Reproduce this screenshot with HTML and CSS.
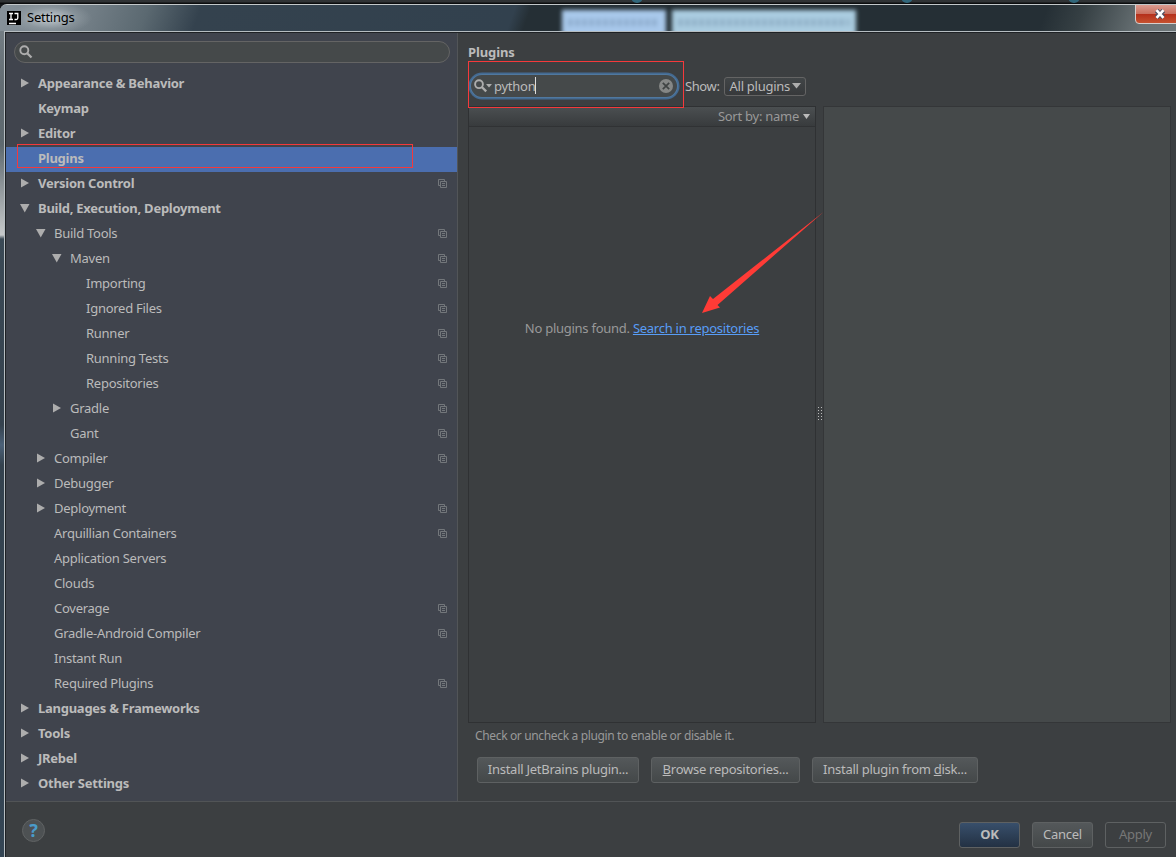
FILE: index.html
```
<!DOCTYPE html>
<html lang="en">
<head>
    <meta charset="UTF-8">
    <meta name="viewport" content="width=device-width, initial-scale=1.0">
    <title>Settings</title>
    <link rel="stylesheet" href="styles.css">
</head>
<body>
    <div class="desktop">
        <span class="dot dot1"></span><span class="dot dot2"></span><span class="dot dot3"></span>
    </div>
    <div class="window">
        <div class="titlebar">
            <svg class="app-icon" width="14" height="14" viewBox="0 0 14 14">
                <rect width="14" height="14" fill="#000"/>
                <path d="M2 2.500h4M4 2.500v6M2 8.500h4M7.500 2.500h3.300v4.500q0 1.500-1.500 1.500h-1.800M2 12.500h7" fill="none" stroke="#fff" stroke-width="1.300"/>
            </svg>
            <span class="title">Settings</span>
            <span class="ghost ghost1"></span>
            <span class="ghost ghost2"></span>
            <button class="close">
                <svg width="12" height="10" viewBox="0 0 12 10">
                    <path d="M2.500 1.500l7 7M9.500 1.500l-7 7" stroke="#4b4f62" stroke-width="4.600"/>
                    <path d="M2.500 1.200l7 7.600M9.500 1.200l-7 7.600" stroke="#fff" stroke-width="2.600"/>
                </svg>
            </button>
        </div>

        <div class="dialog">
            <div class="main">
                <div class="sidebar">
                    <div class="side-search">
                        <svg width="14" height="14" viewBox="0 0 14 14"><circle cx="5.300" cy="5.300" r="4" fill="none" stroke="#adadad" stroke-width="1.900"/><path d="M8.200 8.200l4.300 4.300" stroke="#adadad" stroke-width="2.300"/></svg>
                    </div>
                    <ul class="tree" id="tree"></ul>
                    <div class="mark mark-row"></div>
                </div>

                <div class="content">
                    <h1>Plugins</h1>
                    <div class="toolbar">
                        <div class="search">
                            <svg class="lens" width="19" height="14" viewBox="0 0 19 14"><circle cx="5" cy="5.200" r="3.900" fill="none" stroke="#adadad" stroke-width="1.900"/><path d="M7.800 8l4.400 4.400" stroke="#adadad" stroke-width="2.300"/><path d="M12 5h6l-3 3.500z" fill="#adadad"/></svg>
                            <span class="query">python</span><span class="caret"></span>
                            <svg class="clear" width="14" height="14" viewBox="0 0 14 14"><circle cx="7" cy="7" r="7" fill="#858786"/><path d="M3.800 3.800l6.400 6.400M10.200 3.800l-6.400 6.400" stroke="#3f4343" stroke-width="1.700"/></svg>
                            <div class="mark mark-search"></div>
                        </div>
                        <span class="show">Show:</span>
                        <div class="select"><span>All plugins</span><svg width="9" height="6" viewBox="0 0 9 6"><path d="M0 0h9L4.500 5.500z" fill="#adadad"/></svg></div>
                    </div>
                    <div class="panels">
                        <div class="list">
                            <div class="list-head"><span>Sort by: name</span><svg width="7" height="5" viewBox="0 0 7 5"><path d="M0 0h7L3.500 5z" fill="#bbb"/></svg></div>
                            <div class="empty"><span class="none">No plugins found.</span> <a href="#">Search in repositories</a></div>
                        </div>
                        <div class="splitter"><span class="grip"></span></div>
                        <div class="detail"></div>
                        <svg class="arrow" width="122" height="104" viewBox="0 0 122 104"><path d="M121.500 0L15.500 93L18 95.500L0 101L8 84L11 87z" fill="#ff3b36"/></svg>
                    </div>
                    <p class="hint">Check or uncheck a plugin to enable or disable it.</p>
                    <div class="actions">
                        <button class="btn install">Install <u>J</u>etBrains plugin...</button>
                        <button class="btn browse"><u>B</u>rowse repositories...</button>
                        <button class="btn disk">Install plugin from <u>d</u>isk...</button>
                    </div>
                </div>
            </div>
            <div class="footer">
                <span class="help">?</span>
                <button class="btn ok">OK</button>
                <button class="btn cancel">Cancel</button>
                <button class="btn apply">Apply</button>
            </div>
        </div>
    </div>

    <script src="script.js"></script>
</body>
</html>
```
FILE: styles.css
```
* { box-sizing: border-box; }
body {
    margin: 0;
    width: 1176px;
    height: 857px;
    overflow: hidden;
    background: #15181b;
    color: #bbb;
    font: 13px/17px "Noto Sans", "Open Sans", sans-serif;
    letter-spacing: -.26px;
}
button { font: inherit; color: inherit; letter-spacing: inherit; cursor: pointer; }
.desktop {
    position: relative;
    height: 4px;
    overflow: hidden;
    background: linear-gradient(#303335 0 2px, #0c0d0e 3px);
}
.dot {
    position: absolute;
    top: -9px;
    width: 12px;
    height: 12px;
    border-radius: 50%;
    background: #32687c;
}
.dot1 { left: 631px; }
.dot2 { left: 901px; }
.dot3 { left: 1068px; }
.window {
    height: 853px;
    padding-left: 4px;
    border-top: 1px solid #c3c8ca;
    border-top-left-radius: 7px;
    background: linear-gradient(#7b858c 0, #626c72 80px, #5e696f 140px, #c6c9ca 230px, #3a4955 234px, #35424e 420px, #4b6178 440px, #34424e 460px, #344554 100%);
}
.titlebar {
    position: relative;
    height: 26px;
    margin-left: -4px;
    padding-left: 7px;
    display: flex;
    align-items: center;
    gap: 6px;
    overflow: hidden;
    border-top-left-radius: 6px;
    background:
        radial-gradient(ellipse 42px 16px at 50px 13px, rgba(205, 212, 217, .9), rgba(160, 170, 176, .4) 65%, transparent),
        linear-gradient(110deg, #87929a 0, #717d85 90px, #5b6971 140px, #34424e 190px, #32414e 485px, #252f35 500px, #252f35 985px, #364044 1020px, #697275 1080px, #777f81 1176px);
}
.title { margin-bottom: 2px; color: #000; }
.ghost {
    position: absolute;
    top: 5px;
    height: 26px;
    filter: blur(2px);
}
.ghost::after {
    content: "";
    position: absolute;
    left: 7px;
    right: 7px;
    top: 9px;
    height: 7px;
    background: repeating-linear-gradient(90deg, #536f8b 0 3px, transparent 3px 7px);
    opacity: .5;
    filter: blur(1px);
}
.ghost1 { left: 562px; width: 104px; background: #a9c9ec; }
.ghost2 { left: 672px; width: 184px; background: #abcde1; }
.close {
    position: absolute;
    right: -9px;
    top: -1px;
    width: 50px;
    height: 20px;
    padding: 0 0 1px;
    display: flex;
    align-items: center;
    justify-content: center;
    border: 1px solid #d7cfcd;
    border-radius: 0 0 4px 4px;
    background: linear-gradient(#dc9c90, #c9705f 48%, #b5301b 52%, #c65230);
}
.dialog {
    height: 826px;
    border-left: 1px solid #b6bdc1;
    border-top: 1px solid #b6bdc1;
    box-shadow: inset 1px 1px #1e2124;
    padding: 1px 0 0 1px;
    background: #3c3f41;
    background-clip: padding-box;
}
.main {
    height: 769px;
    display: flex;
    border-bottom: 1px solid #515456;
}
.sidebar {
    position: relative;
    width: 452px;
    padding-top: 8px;
    background: #40444d;
    border-right: 1px solid #525558;
}
.side-search {
    width: 436px;
    height: 22px;
    margin-left: 8px;
    padding-left: 4px;
    display: flex;
    align-items: center;
    border: 1px solid #646464;
    border-radius: 11px;
    background: #45494a;
}
.tree {
    list-style: none;
    margin: 9px 0 0;
    padding: 0;
}
.tree li {
    height: 25px;
    padding: 0 10px 2px 14px;
    display: flex;
    align-items: center;
}
.tree .lvl1 { padding-left: 30px; }
.tree .lvl2 { padding-left: 46px; }
.tree .lvl3 { padding-left: 62px; }
.tree .lvl0 span { font-weight: bold; }
.tree .selected { background: #4b6eaf; }
.tree span { white-space: nowrap; }
.twist { width: 18px; height: 10px; margin-bottom: 1px; }
.copy { margin-left: auto; }
.mark {
    position: absolute;
    border: 1px solid #f5393b;
}
.mark-row { left: 11px; top: 111px; width: 396px; height: 24px; }
.mark-search { left: -3px; top: -14px; width: 216px; height: 47px; z-index: 1; }
.content { padding: 11px 0 0 10px; }
h1 { margin: 0; font-size: 13px; line-height: 17px; letter-spacing: -.1px; }
.toolbar {
    height: 45px;
    padding-top: 1px;
    display: flex;
    align-items: center;
}
.search {
    position: relative;
    width: 206px;
    height: 22px;
    margin: 3px 0 0 3px;
    padding: 0 4px 0 3px;
    display: flex;
    align-items: center;
    border-radius: 13px;
    background: #45494a;
    box-shadow: 0 0 0 1px #50789f, 0 0 0 2.500px #446a91;
}
.lens { margin-right: 1px; }
.query { margin-top: 2px; }
.caret { width: 1px; height: 17px; background: #ddd; }
.clear { margin-left: auto; }
.show { margin: 4px 5px 0 8px; letter-spacing: -.4px; }
.select {
    width: 82px;
    height: 19px;
    margin-top: 4px;
    padding: 0 4px;
    display: flex;
    align-items: center;
    justify-content: space-between;
    white-space: nowrap;
    border: 1px solid #646464;
    border-radius: 3px;
    background: linear-gradient(#414547, #37393b);
}
.panels {
    position: relative;
    height: 617px;
    display: flex;
}
.list { width: 348px; border: 1px solid #2f3133; }
.list-head {
    height: 20px;
    padding-right: 5px;
    display: flex;
    align-items: center;
    justify-content: flex-end;
    gap: 4px;
    color: #999;
    background: linear-gradient(#4b4f51, #383b3d);
    border-bottom: 1px solid #303234;
}
.empty { margin-top: 193px; text-align: center; white-space: nowrap; }
.none { color: #999; }
a { color: #589df6; }
.splitter {
    width: 7px;
    display: flex;
    align-items: center;
    justify-content: center;
}
.grip {
    width: 4px;
    height: 15px;
    background: repeating-linear-gradient(transparent 0 1px, #3c3f41 1px 3px), repeating-linear-gradient(90deg, #bbb 0 1px, transparent 1px 3px);
}
.detail { width: 348px; background: #45494a; border: 1px solid #343638; }
.arrow { position: absolute; left: 234px; top: 106px; }
.hint { margin: 4px 0 0 7px; color: #999; font-size: 12px; letter-spacing: -.35px; }
.actions { display: flex; margin: 13px 0 0 9px; }
.btn {
    height: 26px;
    padding: 0 0 1px;
    white-space: nowrap;
    border: 1px solid #5e6162;
    border-radius: 3px;
    background: linear-gradient(#54585a, #444849);
}
.install { width: 162px; margin-right: 12px; }
.browse { width: 149px; margin-right: 12px; }
.disk { width: 166px; }
.footer {
    height: 55px;
    padding: 0 10px 0 16px;
    display: flex;
    align-items: center;
}
.help {
    width: 23px;
    height: 23px;
    margin: 1px auto 0 0;
    border: 1px solid #606364;
    border-radius: 50%;
    background: #4d5153;
    color: #4a9bc9;
    font: bold 18px/21px "Noto Sans", sans-serif;
    text-align: center;
}
.ok { width: 61px; margin: 11px 12px 0 0; font-weight: bold; background: linear-gradient(#384f6b, #233143); }
.cancel { width: 61px; margin: 11px 12px 0 0; }
.apply { width: 61px; margin-top: 11px; color: #777; background: none; }
```
FILE: script.js
```
// level, label, twist (c = closed, o = open), project icon
const rows = [
    [0, 'Appearance & Behavior', 'c', 0],
    [0, 'Keymap', '', 0],
    [0, 'Editor', 'c', 0],
    [0, 'Plugins', '', 0],
    [0, 'Version Control', 'c', 1],
    [0, 'Build, Execution, Deployment', 'o', 0],
    [1, 'Build Tools', 'o', 1],
    [2, 'Maven', 'o', 1],
    [3, 'Importing', '', 1],
    [3, 'Ignored Files', '', 1],
    [3, 'Runner', '', 1],
    [3, 'Running Tests', '', 1],
    [3, 'Repositories', '', 1],
    [2, 'Gradle', 'c', 1],
    [2, 'Gant', '', 1],
    [1, 'Compiler', 'c', 1],
    [1, 'Debugger', 'c', 0],
    [1, 'Deployment', 'c', 1],
    [1, 'Arquillian Containers', '', 1],
    [1, 'Application Servers', '', 0],
    [1, 'Clouds', '', 0],
    [1, 'Coverage', '', 1],
    [1, 'Gradle-Android Compiler', '', 1],
    [1, 'Instant Run', '', 0],
    [1, 'Required Plugins', '', 1],
    [0, 'Languages & Frameworks', 'c', 0],
    [0, 'Tools', 'c', 0],
    [0, 'JRebel', 'c', 0],
    [0, 'Other Settings', 'c', 0]
];
const shapes = { c: 'M1 .5v9l8-4.500z', o: 'M0 1h9.500L4.750 9.500z', '': '' };
const copy = '<svg class="copy" width="9" height="9" viewBox="0 0 9 9"><path d="M6.500 2V.5H.5v6H2M2.500 2.500h6v6h-6zM4 4.500h3M4 6.500h3" fill="none" stroke="#73777b"/></svg>';

document.getElementById('tree').innerHTML = rows.map(([level, label, twist, icon]) => `
    <li class="lvl${level}${label === 'Plugins' ? ' selected' : ''}">
        <svg class="twist" viewBox="0 0 18 10"><path d="${shapes[twist]}" fill="#adadad"/></svg>
        <span>${label.replace('&', '&amp;')}</span>${icon ? copy : ''}
    </li>`).join('');
```
